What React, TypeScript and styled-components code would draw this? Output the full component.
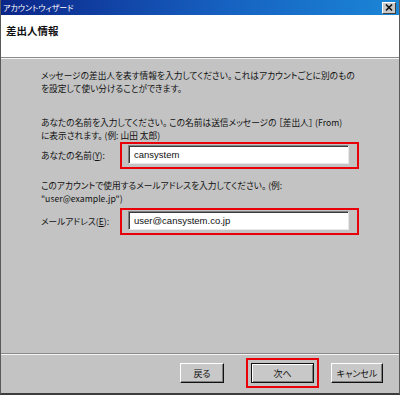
import React from 'react';
import styled, { createGlobalStyle } from 'styled-components';

const GlobalStyle = createGlobalStyle`
    html, body {
        margin: 0;
        padding: 0;
        background: #c3c3c3;
    }
    * {
        box-sizing: border-box;
    }
`;

const jp = `"Noto Sans CJK JP", "Liberation Sans", sans-serif`;

const Window = styled.div`
    width: 400px;
    height: 395px;
    display: flex;
    flex-direction: column;
    background: #c3c3c3;
    border-left: 1px solid #5a5a5a;
    border-right: 1px solid #5a5a5a;
    border-bottom: 2px solid #3c3c3c;
    font-family: ${jp};
    font-feature-settings: 'palt';
    color: #111;
`;

const TitleBar = styled.div`
    height: 15px;
    display: flex;
    align-items: center;
    justify-content: space-between;
    padding: 0 3px 0 2px;
    background: linear-gradient(to right, #0b2588 0%, #1660c0 55%, #1b86d6 100%);
    color: #fff;
    font-size: 8px;
    line-height: 15px;
`;

const CloseButton = styled.div`
    width: 14px;
    height: 12px;
    display: flex;
    align-items: center;
    justify-content: center;
    background: #c8c8c8;
    border-top: 1px solid #fff;
    border-left: 1px solid #fff;
    border-right: 1px solid #404040;
    border-bottom: 1px solid #404040;
`;

const Header = styled.div`
    height: 43px;
    background: #fff;
    border-bottom: 1px solid #8a8a8a;
    box-shadow: 0 1px 0 #f4f4f4;
    padding: 8px 0 0 5px;
`;

const HeaderTitle = styled.div`
    font-size: 10.5px;
    font-weight: bold;
    line-height: 16px;
`;

const Body = styled.div`
    flex: 1;
    padding: 11px 0 0 40px;
    display: flex;
    flex-direction: column;
`;

const Para = styled.p<{ $gap: number }>`
    margin: ${(p) => p.$gap}px 0 0 0;
    font-size: 8.7px;
    line-height: 13px;
    white-space: nowrap;
`;

const FieldRow = styled.div<{ $gap: number }>`
    display: flex;
    align-items: center;
    margin-top: ${(p) => p.$gap}px;
`;

const Label = styled.div`
    width: 79px;
    font-size: 8.7px;
    line-height: 13px;
    white-space: nowrap;
`;

const Highlight = styled.div<{ $pad: string }>`
    border: 2px solid #e8000b;
    padding: ${(p) => p.$pad};
`;

const FieldBox = styled(Highlight)`
    width: 239px;
    height: 27px;
`;

const TextBox = styled.div`
    width: 221px;
    height: 19px;
    background: #fff;
    border-top: 1px solid #808080;
    border-left: 1px solid #808080;
    border-right: 1px solid #e8e8e8;
    border-bottom: 1px solid #e8e8e8;
    box-shadow: inset 1px 1px 0 #3a3a3a;
    padding: 0 0 0 5px;
    font-family: "Liberation Sans", sans-serif;
    font-size: 9.5px;
    line-height: 17px;
    color: #111;
`;

const Footer = styled.div`
    height: 40px;
    border-top: 1px solid #8a8a8a;
    box-shadow: inset 0 1px 0 #f4f4f4;
    display: flex;
    align-items: flex-start;
    justify-content: flex-end;
    padding: 4px 16px 0 0;
`;

const Button = styled.div<{ $w: number; $default?: boolean }>`
    width: ${(p) => p.$w}px;
    height: 20px;
    display: flex;
    align-items: center;
    justify-content: center;
    background: #c8c8c8;
    font-size: 9px;
    color: #111;
    border-top: 1px solid ${(p) => (p.$default ? '#111' : '#fff')};
    border-left: 1px solid ${(p) => (p.$default ? '#111' : '#fff')};
    border-right: 1px solid #111;
    border-bottom: 1px solid #111;
    box-shadow: ${(p) =>
        p.$default
            ? 'inset 1px 1px 0 #fff, inset -1px -1px 0 #808080'
            : 'inset -1px -1px 0 #808080'};
`;

const ButtonSlot = styled.div<{ $gap: number; $top?: number }>`
    margin-left: ${(p) => p.$gap}px;
    padding-top: ${(p) => p.$top ?? 5}px;
`;

const CloseIcon = () => (
    <svg width="8" height="7" viewBox="0 0 8 7">
        <path d="M1 0.5 L7 6.5 M7 0.5 L1 6.5" stroke="#111" strokeWidth="1.6" />
    </svg>
);

export default function App() {
    return (
        <>
            <GlobalStyle />
            <Window>
                <TitleBar>
                    <span>アカウントウィザード</span>
                    <CloseButton>
                        <CloseIcon />
                    </CloseButton>
                </TitleBar>
                <Header>
                    <HeaderTitle>差出人情報</HeaderTitle>
                </Header>
                <Body>
                    <Para $gap={0}>
                        メッセージの差出人を表す情報を入力してください。 これはアカウントごとに別のもの
                        <br />
                        を設定して使い分けることができます。
                    </Para>
                    <Para $gap={21}>
                        あなたの名前を入力してください。 この名前は送信メッセージの ［差出人］ (From)
                        <br />
                        に表示されます。 (例: 山田 太郎)
                    </Para>
                    <FieldRow $gap={0}>
                        <Label>あなたの名前(<u>Y</u>):</Label>
                        <FieldBox $pad="1px 0 0 6px">
                            <TextBox>cansystem</TextBox>
                        </FieldBox>
                    </FieldRow>
                    <Para $gap={10}>
                        このアカウントで使用するメールアドレスを入力してください。 (例:
                        <br />
                        "user@example.jp")
                    </Para>
                    <FieldRow $gap={3}>
                        <Label>メールアドレス(<u>E</u>):</Label>
                        <FieldBox $pad="1px 0 0 6px">
                            <TextBox>user@cansystem.co.jp</TextBox>
                        </FieldBox>
                    </FieldRow>
                </Body>
                <Footer>
                    <ButtonSlot $gap={0}>
                        <Button $w={44}>戻る</Button>
                    </ButtonSlot>
                    <ButtonSlot $gap={22} $top={0}>
                        <Highlight $pad="3px">
                            <Button $w={63} $default>
                                次へ
                            </Button>
                        </Highlight>
                    </ButtonSlot>
                    <ButtonSlot $gap={12}>
                        <Button $w={52}>キャンセル</Button>
                    </ButtonSlot>
                </Footer>
            </Window>
        </>
    );
}
